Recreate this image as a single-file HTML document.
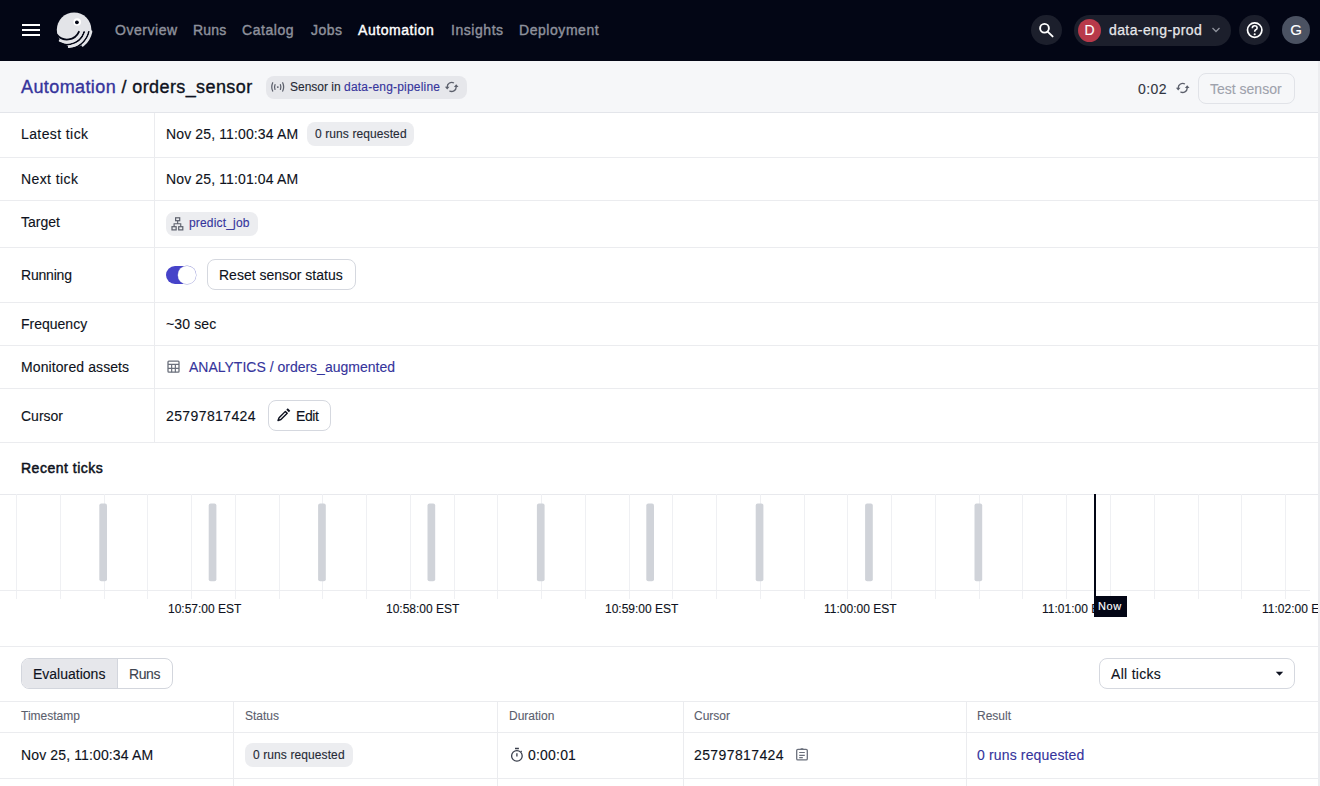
<!DOCTYPE html>
<html><head><meta charset="utf-8">
<style>
*{box-sizing:border-box;margin:0;padding:0}
html,body{width:1320px;height:786px;overflow:hidden;background:#fff;font-family:"Liberation Sans",sans-serif;color:#0E1220;-webkit-text-stroke-width:0.12px}
.a{position:absolute;white-space:nowrap}
.nav{position:absolute;left:0;top:0;width:1320px;height:61px;background:#030615}
.ni{position:absolute;top:22px;font-size:14px;line-height:16px;color:#8E919C;-webkit-text-stroke:0.4px #8E919C;letter-spacing:0.55px}
.ph{position:absolute;left:0;top:61px;width:1318px;height:52px;background:#F6F7F9;border-bottom:1px solid #E3E5EA}
.hl{position:absolute;left:0;width:1318px;height:1px;background:#EBECEF}
.vl{position:absolute;width:1px;background:#EBECEF}
.lbl{position:absolute;left:21px;font-size:14px;line-height:16px}
.val{position:absolute;left:166px;font-size:14px;line-height:16px}
.tag{position:absolute;height:24px;border-radius:8px;background:#ECEDF0;font-size:12px;line-height:24px;color:#262A36}
.btn{position:absolute;border:1px solid #D5D8DF;border-radius:8px;background:#fff;font-size:14px;line-height:29px;color:#0E1220}
.link{color:#35349C}
.th{position:absolute;top:709px;font-size:12px;line-height:14px;color:#5B606D;-webkit-text-stroke-width:0.1px}
.ax{position:absolute;white-space:nowrap;top:602px;font-size:12px;line-height:14px;color:#0E1220}
</style></head><body>

<div class="nav">
  <div class="a" style="left:22px;top:24px;width:18px;height:2px;background:#fff"></div>
  <div class="a" style="left:22px;top:29px;width:18px;height:2px;background:#fff"></div>
  <div class="a" style="left:22px;top:34px;width:18px;height:2px;background:#fff"></div>
  <svg class="a" style="left:54px;top:10px" width="40" height="40" viewBox="0 0 40 40">
    <g fill="none" stroke-linecap="round">
    <circle cx="20.1" cy="19.8" r="17.3" fill="#E3E4E8"/>
    <path d="M3.04 24.86 A13 13 0 0 0 24.88 21.79" stroke="#030615" stroke-width="1.8"/>
    <path d="M-0.79 28.07 A18 18 0 0 0 30.12 22.06" stroke="#030615" stroke-width="1.8"/>
    <path d="M-4.24 30.96 A22.5 22.5 0 0 0 34.83 21.94" stroke="#030615" stroke-width="1.8"/>
    <path d="M6.07 30.70 A15.8 15.8 0 0 0 27.65 22.42" stroke="#E3E4E8" stroke-width="2.6"/>
    <path d="M15.13 36.79 A20.4 20.4 0 0 0 32.29 23.14" stroke="#E3E4E8" stroke-width="2.6"/>
    <path d="M28.81 35.34 A24.6 24.6 0 0 0 37.06 21.61" stroke="#E3E4E8" stroke-width="2.6"/>
    </g>
    <circle cx="23.2" cy="12" r="3.8" fill="#fff"/>
    <circle cx="22.9" cy="12.3" r="1.9" fill="#030615"/>
  </svg>
  <div class="ni" style="left:115px">Overview</div>
  <div class="ni" style="left:193px;letter-spacing:0.2px">Runs</div>
  <div class="ni" style="left:242px">Catalog</div>
  <div class="ni" style="left:311px;letter-spacing:0.5px">Jobs</div>
  <div class="ni" style="left:358px;color:#fff;-webkit-text-stroke:0.4px #fff">Automation</div>
  <div class="ni" style="left:451px">Insights</div>
  <div class="ni" style="left:519px">Deployment</div>

  <div class="a" style="left:1031px;top:14.5px;width:30.5px;height:30.5px;border-radius:50%;background:#1C1F2C"></div>
  <svg class="a" style="left:1036px;top:18px" width="20" height="22" viewBox="0 0 20 22"><circle cx="8.5" cy="10.25" r="4.4" stroke="#fff" stroke-width="1.9" fill="none"/><path d="M11.6 13.6 L16.6 18.4" stroke="#fff" stroke-width="1.9" stroke-linecap="round"/></svg>

  <div class="a" style="left:1074px;top:14.5px;width:157px;height:31px;border-radius:16px;background:#1C1F2C"></div>
  <div class="a" style="left:1078px;top:18.5px;width:23px;height:23px;border-radius:50%;background:#B8394A;color:#fff;font-size:14px;line-height:23px;text-align:center">D</div>
  <div class="a" style="left:1109px;top:22px;font-size:14px;line-height:16px;color:#E6E7EA;letter-spacing:0.4px;-webkit-text-stroke:0.25px #E6E7EA">data-eng-prod</div>
  <svg class="a" style="left:1211px;top:26px" width="10" height="8" viewBox="0 0 10 8"><path d="M1.5 2 L5 5.5 L8.5 2" stroke="#8F929C" stroke-width="1.3" fill="none"/></svg>

  <div class="a" style="left:1239px;top:14.5px;width:30.5px;height:30.5px;border-radius:50%;background:#1C1F2C"></div>
  <svg class="a" style="left:1245px;top:20px" width="20" height="20" viewBox="0 0 20 20"><circle cx="9.7" cy="10.1" r="7.2" stroke="#fff" stroke-width="1.7" fill="none"/><path d="M7.3 8.3 Q7.3 5.8 9.7 5.8 Q12.1 5.8 12.1 7.9 Q12.1 9.1 10.7 9.8 Q9.7 10.3 9.7 11.8" stroke="#fff" stroke-width="1.6" fill="none"/><circle cx="9.7" cy="14.2" r="1.05" fill="#fff"/></svg>

  <div class="a" style="left:1282px;top:16px;width:28px;height:28px;border-radius:50%;background:#4B5262;color:#fff;font-size:15px;line-height:28px;text-align:center">G</div>
</div>

<div class="ph"></div>
<div class="a" style="left:21px;top:77px;font-size:18px;line-height:21px;color:#0E1220;letter-spacing:0.4px;-webkit-text-stroke-width:0.35px"><span class="link">Automation</span> / orders_sensor</div>
<div class="tag" style="left:266px;top:75.5px;width:201px;height:23px;background:#E6E7EB"></div>
<svg class="a" style="left:266px;top:78px" width="20" height="18" viewBox="0 0 20 18"><circle cx="11.8" cy="9.1" r="0.95" fill="#5C606C"/><path d="M9 6.7 Q8 9.1 9 11.4 M14.4 6.7 Q15.4 9.1 14.4 11.4 M6.7 4.7 Q4.8 9.1 6.7 13.1 M16.7 4.7 Q18.6 9.1 16.7 13.1" stroke="#5C606C" stroke-width="1.25" fill="none" stroke-linecap="round"/></svg>
<div class="a" style="left:290px;top:80px;font-size:12px;line-height:14px;color:#262A36"><span>Sensor in </span><span class="link" style="letter-spacing:0.2px">data-eng-pipeline</span></div>
<svg class="a" style="left:443px;top:79px" width="17" height="14" viewBox="0 0 17 14"><path d="M10.95 4 A4.5 4.5 0 0 0 4.2 7.9 M6.45 11.8 A4.5 4.5 0 0 0 13.2 7.9" stroke="#5C606C" stroke-width="1.35" fill="none"/><path d="M1.9 7.7 L6.5 7.7 L4.2 10.5 Z M10.9 8.1 L15.5 8.1 L13.2 5.3 Z" fill="#5C606C"/></svg>

<div class="a" style="left:1138px;top:81px;font-size:14px;line-height:16px;color:#323642;letter-spacing:0.45px">0:02</div>
<svg class="a" style="left:1174px;top:80px" width="17" height="14" viewBox="0 0 17 14"><path d="M10.95 4 A4.5 4.5 0 0 0 4.2 7.9 M6.45 11.8 A4.5 4.5 0 0 0 13.2 7.9" stroke="#5C606C" stroke-width="1.35" fill="none"/><path d="M1.9 7.7 L6.5 7.7 L4.2 10.5 Z M10.9 8.1 L15.5 8.1 L13.2 5.3 Z" fill="#5C606C"/></svg>
<div class="btn" style="left:1198px;top:73px;width:97px;height:31px;border-color:#E1E3E8;background:#F6F7F9;color:#9EA2AC;padding-left:11px;line-height:31px">Test sensor</div>


<div class="vl" style="left:154px;top:113px;height:329px"></div>
<div class="hl" style="top:157px"></div>
<div class="hl" style="top:200px"></div>
<div class="hl" style="top:247px"></div>
<div class="hl" style="top:302px"></div>
<div class="hl" style="top:345px"></div>
<div class="hl" style="top:388px"></div>
<div class="hl" style="top:442px"></div>

<div class="lbl" style="top:126px;letter-spacing:0.4px">Latest tick</div>
<div class="val" style="top:126px;letter-spacing:0.13px">Nov 25, 11:00:34 AM</div>
<div class="tag" style="left:307px;top:122px;width:107px;padding-left:8px;letter-spacing:0.1px">0 runs requested</div>

<div class="lbl" style="top:171px;letter-spacing:0.4px">Next tick</div>
<div class="val" style="top:171px;letter-spacing:0.13px">Nov 25, 11:01:04 AM</div>

<div class="lbl" style="top:214px">Target</div>
<div class="tag" style="left:166px;top:212px;width:92px"></div>
<svg class="a" style="left:169px;top:215px" width="16" height="17" viewBox="0 0 16 17"><g stroke="#5C606C" stroke-width="1.2" fill="none"><rect x="6.6" y="2.8" width="4.1" height="2.9"/><rect x="3" y="11.7" width="4.15" height="3.2"/><rect x="9.7" y="11.7" width="4.1" height="3.2"/><path d="M8.65 5.7 V8.8 M5.1 11.7 V8.8 H11.75 V11.7" stroke-width="1.1"/></g></svg>
<div class="a link" style="left:189px;top:216px;font-size:12px;line-height:14px;letter-spacing:0.17px">predict_job</div>

<div class="lbl" style="top:267px;letter-spacing:-0.2px">Running</div>
<div class="a" style="left:166px;top:265.5px;width:30px;height:18.5px;border-radius:10px;background:#4643C9"></div>
<div class="a" style="left:178px;top:266px;width:17.5px;height:17.5px;border-radius:50%;background:#fff;box-shadow:0 0 0 0.4px #9B9DD8"></div>
<div class="btn" style="left:207px;top:259px;width:149px;height:31px;padding-left:11px;line-height:30px">Reset sensor status</div>

<div class="lbl" style="top:316px">Frequency</div>
<div class="val" style="top:316px;letter-spacing:0.13px">~30 sec</div>

<div class="lbl" style="top:359px;letter-spacing:0.1px">Monitored assets</div>
<svg class="a" style="left:165px;top:359px" width="16" height="16" viewBox="0 0 16 16"><rect x="3" y="2.2" width="11" height="11" rx="0.9" stroke="#6B707C" stroke-width="1.3" fill="none"/><path d="M3 5.3 H14 M3 9.3 H14 M6.65 5.3 V13.2 M10.35 5.3 V13.2" stroke="#6B707C" stroke-width="1.2" fill="none"/></svg>
<div class="a link" style="left:189px;top:359px;font-size:14px;line-height:16px">ANALYTICS / orders_augmented</div>

<div class="lbl" style="top:408px">Cursor</div>
<div class="val" style="top:408px;letter-spacing:0.39px">25797817424</div>
<div class="btn" style="left:268px;top:400px;width:63px;height:31px"></div>
<svg class="a" style="left:275px;top:407px" width="17" height="17" viewBox="0 0 17 17"><path d="M3 13.6 L4.08 10.68 L10.38 4.38 L12.22 6.22 L5.92 12.52 Z" stroke="#0E1220" stroke-width="1.4" fill="none" stroke-linejoin="round"/><path d="M12.6 4 L14 2.6" stroke="#0E1220" stroke-width="3.6"/></svg>
<div class="a" style="left:296px;top:408px;font-size:14px;line-height:16px;letter-spacing:-0.4px">Edit</div>

<div class="a" style="left:21px;top:460px;font-size:14px;line-height:16px;color:#0E1220;-webkit-text-stroke-width:0.5px;letter-spacing:0.5px">Recent ticks</div>
<svg class="a" style="left:0;top:494px" width="1318" height="110" viewBox="0 0 1318 110"><rect x="0" y="0" width="1318" height="1" fill="#E8E9ED"/><rect x="16" y="0" width="1" height="105" fill="#EFF0F3"/><rect x="60" y="0" width="1" height="105" fill="#EFF0F3"/><rect x="104" y="0" width="1" height="105" fill="#EFF0F3"/><rect x="147" y="0" width="1" height="105" fill="#EFF0F3"/><rect x="191" y="0" width="1" height="105" fill="#EFF0F3"/><rect x="235" y="0" width="1" height="105" fill="#EFF0F3"/><rect x="279" y="0" width="1" height="105" fill="#EFF0F3"/><rect x="322" y="0" width="1" height="105" fill="#EFF0F3"/><rect x="366" y="0" width="1" height="105" fill="#EFF0F3"/><rect x="410" y="0" width="1" height="105" fill="#EFF0F3"/><rect x="454" y="0" width="1" height="105" fill="#EFF0F3"/><rect x="497" y="0" width="1" height="105" fill="#EFF0F3"/><rect x="541" y="0" width="1" height="105" fill="#EFF0F3"/><rect x="585" y="0" width="1" height="105" fill="#EFF0F3"/><rect x="629" y="0" width="1" height="105" fill="#EFF0F3"/><rect x="672" y="0" width="1" height="105" fill="#EFF0F3"/><rect x="716" y="0" width="1" height="105" fill="#EFF0F3"/><rect x="760" y="0" width="1" height="105" fill="#EFF0F3"/><rect x="804" y="0" width="1" height="105" fill="#EFF0F3"/><rect x="847" y="0" width="1" height="105" fill="#EFF0F3"/><rect x="891" y="0" width="1" height="105" fill="#EFF0F3"/><rect x="935" y="0" width="1" height="105" fill="#EFF0F3"/><rect x="979" y="0" width="1" height="105" fill="#EFF0F3"/><rect x="1022" y="0" width="1" height="105" fill="#EFF0F3"/><rect x="1066" y="0" width="1" height="105" fill="#EFF0F3"/><rect x="1110" y="0" width="1" height="105" fill="#EFF0F3"/><rect x="1154" y="0" width="1" height="105" fill="#EFF0F3"/><rect x="1198" y="0" width="1" height="105" fill="#EFF0F3"/><rect x="1241" y="0" width="1" height="105" fill="#EFF0F3"/><rect x="1285" y="0" width="1" height="105" fill="#EFF0F3"/><rect x="0" y="96" width="1310" height="1" fill="#ECEDF0"/><rect x="99.30" y="9.5" width="7.7" height="77.7" rx="2" fill="#D0D3D9"/><rect x="208.70" y="9.5" width="7.7" height="77.7" rx="2" fill="#D0D3D9"/><rect x="318.10" y="9.5" width="7.7" height="77.7" rx="2" fill="#D0D3D9"/><rect x="427.50" y="9.5" width="7.7" height="77.7" rx="2" fill="#D0D3D9"/><rect x="536.90" y="9.5" width="7.7" height="77.7" rx="2" fill="#D0D3D9"/><rect x="646.30" y="9.5" width="7.7" height="77.7" rx="2" fill="#D0D3D9"/><rect x="755.70" y="9.5" width="7.7" height="77.7" rx="2" fill="#D0D3D9"/><rect x="865.10" y="9.5" width="7.7" height="77.7" rx="2" fill="#D0D3D9"/><rect x="974.50" y="9.5" width="7.7" height="77.7" rx="2" fill="#D0D3D9"/><rect x="1094" y="0" width="2" height="102" fill="#030615"/></svg>
<div class="ax" style="left:168px">10:57:00 EST</div>
<div class="ax" style="left:386px">10:58:00 EST</div>
<div class="ax" style="left:605px">10:59:00 EST</div>
<div class="ax" style="left:824px">11:00:00 EST</div>
<div class="ax" style="left:1042px">11:01:00 EST</div>
<div class="ax" style="left:1262px">11:02:00 EST</div>
<div class="a" style="left:1094px;top:596px;width:33px;height:21px;background:#030615;color:#fff;font-size:11px;line-height:21px;padding-left:4px;letter-spacing:0.6px">Now</div>

<div class="hl" style="top:646px"></div>

<div class="a" style="left:21px;top:658px;width:152px;height:31px;border:1px solid #D3D6DD;border-radius:8px;overflow:hidden;background:#fff">
  <div class="a" style="left:0;top:0;width:96px;height:29px;background:#E6E7EB;border-right:1px solid #D3D6DD"></div>
</div>
<div class="a" style="left:33px;top:666px;font-size:14px;line-height:16px">Evaluations</div>
<div class="a" style="left:129px;top:666px;font-size:14px;line-height:16px;color:#40444F;letter-spacing:-0.4px">Runs</div>

<div class="btn" style="left:1099px;top:658px;width:196px;height:31px"></div>
<div class="a" style="left:1111px;top:666px;font-size:14px;line-height:16px;letter-spacing:0.3px">All ticks</div>
<svg class="a" style="left:1275px;top:671px" width="9" height="6" viewBox="0 0 9 6"><path d="M0.8 0.8 L8.2 0.8 L4.5 4.8 Z" fill="#0E1220"/></svg>

<div class="hl" style="top:701px"></div>
<div class="hl" style="top:732px"></div>
<div class="hl" style="top:778px"></div>
<div class="vl" style="left:233px;top:702px;height:84px"></div>
<div class="vl" style="left:497px;top:702px;height:84px"></div>
<div class="vl" style="left:683px;top:702px;height:84px"></div>
<div class="vl" style="left:966px;top:702px;height:84px"></div>

<div class="th" style="left:21px">Timestamp</div>
<div class="th" style="left:245px">Status</div>
<div class="th" style="left:509px">Duration</div>
<div class="th" style="left:694px">Cursor</div>
<div class="th" style="left:977px">Result</div>

<div class="a" style="left:21px;top:747px;font-size:14px;line-height:16px;letter-spacing:0.13px">Nov 25, 11:00:34 AM</div>
<div class="tag" style="left:245px;top:743px;width:108px;padding-left:8px;letter-spacing:0.1px">0 runs requested</div>
<svg class="a" style="left:509px;top:746px" width="16" height="16" viewBox="0 0 16 16"><circle cx="7.9" cy="9.9" r="5.3" stroke="#3A3F4C" stroke-width="1.3" fill="none"/><path d="M6 2.5 H9.9 M7.9 7.2 V10.4 M11.8 5.8 L12.6 5" stroke="#3A3F4C" stroke-width="1.3" fill="none"/></svg>
<div class="a" style="left:528px;top:747px;font-size:14px;line-height:16px;letter-spacing:0.2px">0:00:01</div>
<div class="a" style="left:694px;top:747px;font-size:14px;line-height:16px;letter-spacing:0.39px">25797817424</div>
<svg class="a" style="left:794px;top:746px" width="16" height="16" viewBox="0 0 16 16"><rect x="2.7" y="3.3" width="10.6" height="10.6" rx="1.2" stroke="#6B707C" stroke-width="1.3" fill="none"/><path d="M6.2 3.6 L7.5 2.2 Q8 1.8 8.5 2.2 L9.8 3.6 Z" fill="#6B707C"/><path d="M5.2 6.5 H10.8 M5.2 9.3 H10.8 M5.2 11.6 H8.8" stroke="#6B707C" stroke-width="1.2" fill="none"/></svg>
<div class="a link" style="left:977px;top:747px;font-size:14px;line-height:16px;letter-spacing:0.15px">0 runs requested</div>

<div class="a" style="left:1318px;top:61px;width:2px;height:725px;background:#ECEDF0"></div>

</body></html>
